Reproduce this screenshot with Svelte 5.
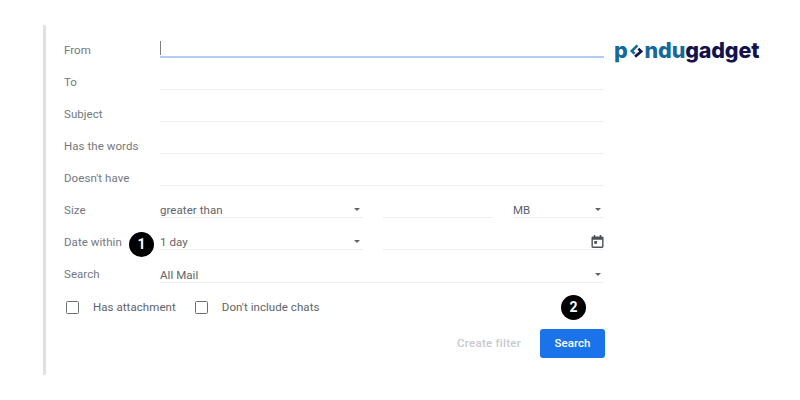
<script>
  const textRows = ['From', 'To', 'Subject', 'Has the words', "Doesn't have"];
</script>

<div class="page">
  <section class="panel">
    {#each textRows as label, i}
      <div class="row">
        <span class="label">{label}</span>
        <div class="field" class:focused={i === 0}>
          {#if i === 0}<span class="caret"></span>{/if}
        </div>
      </div>
    {/each}

    <div class="row">
      <span class="label">Size</span>
      <div class="split">
        <div class="field select first"><span>greater than</span><i class="arrow"></i></div>
        <div class="field middle"></div>
        <div class="field select unit"><span>MB</span><i class="arrow"></i></div>
      </div>
    </div>

    <div class="row">
      <span class="label">Date within</span>
      <div class="split">
        <div class="field select first"><span>1 day</span><i class="arrow"></i></div>
        <div class="field date">
          <svg class="cal" viewBox="0 0 14 14" width="13" height="13" aria-hidden="true">
            <path fill="#4d5156" d="M3 0h1.6v1.5h4.8V0H11v1.5h1A1.5 1.5 0 0 1 13.5 3v9.5A1.5 1.5 0 0 1 12 14H2A1.5 1.5 0 0 1 .5 12.5V3A1.5 1.5 0 0 1 2 1.5h1zM2 5v7.5h10V5z"/>
            <rect x="3.5" y="6.5" width="3" height="3" fill="#4d5156"/>
          </svg>
        </div>
      </div>
      <span class="badge one">1</span>
    </div>

    <div class="row tall">
      <span class="label">Search</span>
      <div class="field select"><span>All Mail</span><i class="arrow"></i></div>
    </div>

    <div class="checks">
      <label class="check"><span class="box"></span>Has attachment</label>
      <label class="check"><span class="box"></span>Don't include chats</label>
    </div>

    <div class="actions">
      <span class="create">Create filter</span>
      <button class="search">Search</button>
      <span class="badge two">2</span>
    </div>
  </section>

  <div class="logo">
    <span class="teal">p</span><svg class="mark" viewBox="0 0 16 14" width="15" height="14" aria-hidden="true">
      <path d="M9 1 3 7 6 10" fill="none" stroke="#14689a" stroke-width="2.8"/>
      <path d="M6.5 13 13 7.5 10 4.5" fill="none" stroke="#14124d" stroke-width="2.8"/>
    </svg><span class="teal">ndu</span><span class="navy">gadget</span>
  </div>
</div>

<style>
  :global(body) {
    margin: 0;
    background: #fff;
  }
  .page {
    display: flex;
    align-items: flex-start;
    width: 800px;
    height: 400px;
    overflow: hidden;
    padding: 25px 0 0 43px;
    box-sizing: border-box;
    font-family: Roboto, "Liberation Sans", sans-serif;
    font-size: 11.5px;
    letter-spacing: 0.06px;
    color: #5f6368;
  }
  .panel {
    box-sizing: border-box;
    width: 562px;
    height: 350px;
    flex: none;
    padding: 1px 0 0 18px;
    border-left: 3px solid #dfe0e2;
  }
  .row {
    position: relative;
    display: flex;
    height: 32px;
    margin-right: 1px;
  }
  .row.tall {
    height: 33px;
  }
  .label {
    flex: none;
    width: 96px;
    line-height: 48px;
    height: 32px;
    color: #74787c;
  }
  .field {
    position: relative;
    box-sizing: border-box;
    flex: 1;
    display: flex;
    align-items: center;
    justify-content: space-between;
    height: 32px;
    padding-top: 16px;
    border-bottom: 1px solid #eeeff0;
    color: #5f6368;
  }
  .row.tall .field {
    height: 33px;
    padding-top: 17px;
  }
  .field.focused {
    border-bottom: 2px solid #b4cbf3;
  }
  .caret {
    position: absolute;
    left: 0;
    bottom: 1px;
    width: 1px;
    height: 14px;
    background: #7d8084;
  }
  .split {
    flex: 1;
    display: flex;
    gap: 20px;
  }
  .first {
    flex: none;
    width: 203px;
  }
  .middle {
    flex: none;
    width: 110px;
  }
  .unit {
    flex: none;
    width: 91px;
  }
  .date {
    flex: 1;
  }
  .arrow {
    width: 0;
    height: 0;
    margin-right: 3px;
    border-left: 3.5px solid transparent;
    border-right: 3.5px solid transparent;
    border-top: 3.5px solid #5f6368;
  }
  .cal {
    position: absolute;
    right: 0;
    top: 17px;
  }
  .badge {
    position: absolute;
    box-sizing: border-box;
    width: 25px;
    height: 25px;
    border-radius: 50%;
    background: #000;
    color: #fff;
    font-weight: 700;
    font-size: 14px;
    letter-spacing: 0;
    text-align: center;
    line-height: 25px;
  }
  .one {
    left: 65px;
    top: 14px;
  }
  .two {
    right: 19px;
    top: -33px;
  }
  .checks {
    display: flex;
    height: 47px;
    align-items: center;
    gap: 19px;
    padding: 1px 0 0 2px;
    box-sizing: border-box;
  }
  .check {
    display: flex;
    align-items: center;
    gap: 14px;
  }
  .box {
    box-sizing: border-box;
    width: 13px;
    height: 13px;
    border: 1.5px solid #6a6e72;
    border-radius: 1.5px;
  }
  .actions {
    position: relative;
    display: flex;
    justify-content: flex-end;
    align-items: center;
    gap: 19px;
    margin-top: -2px;
    height: 30px;
  }
  .create {
    color: #c8cacc;
    font-weight: 500;
    letter-spacing: 0.25px;
  }
  .search {
    width: 65px;
    height: 29px;
    border: 0;
    border-radius: 3px;
    background: #1a73e8;
    color: #fff;
    font: 500 11.5px Roboto, "Liberation Sans", sans-serif;
    letter-spacing: 0.06px;
  }
  .logo {
    display: flex;
    align-items: center;
    margin: 11px 0 0 9px;
    height: 28px;
    font-family: Inter, "Liberation Sans", sans-serif;
    font-size: 21.5px;
    font-weight: 800;
    letter-spacing: -0.15px;
    white-space: nowrap;
  }
  .teal {
    color: #14689a;
  }
  .navy {
    color: #14124d;
  }
  .mark {
    margin: 2px 1px 0 1px;
  }
</style>
